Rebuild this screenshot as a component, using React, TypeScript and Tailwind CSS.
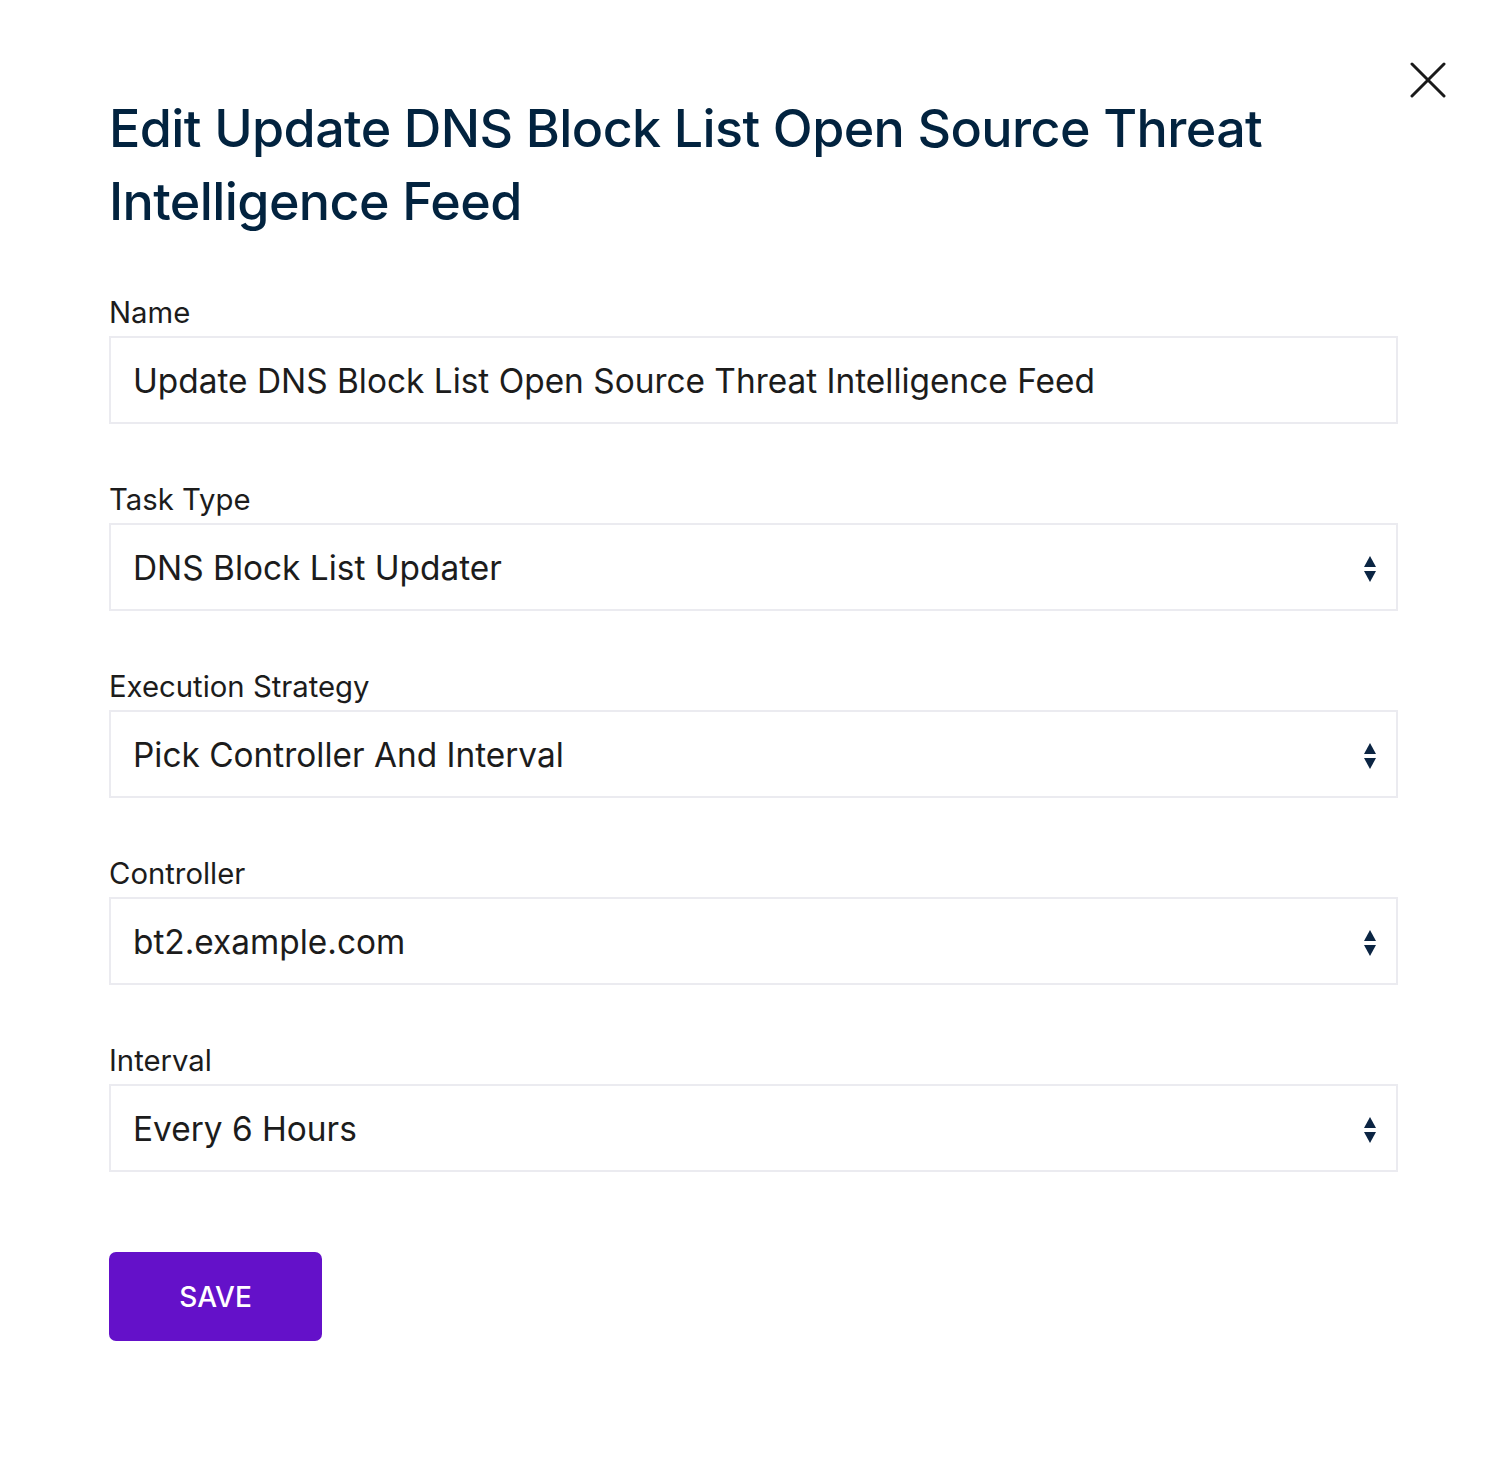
import React from "react";

const fields = [
  { label: "Name", value: "Update DNS Block List Open Source Threat Intelligence Feed", select: false },
  { label: "Task Type", value: "DNS Block List Updater", select: true },
  { label: "Execution Strategy", value: "Pick Controller And Interval", select: true },
  { label: "Controller", value: "bt2.example.com", select: true },
  { label: "Interval", value: "Every 6 Hours", select: true },
];

const SortArrows = () => (
  <svg width="16" height="28" viewBox="0 0 16 28" className="shrink-0">
    <path d="M8 1 L14 12 H2 Z" fill="#0b2543" />
    <path d="M8 27 L14 16 H2 Z" fill="#0b2543" />
  </svg>
);

const App: React.FC = () => {
  return (
    <div
      className="relative min-h-[1460px] w-full bg-white pl-[109px] pr-[110px] pt-[92px]"
      style={{ fontFamily: "Inter, 'Noto Sans', sans-serif" }}
    >
      <button aria-label="Close" className="absolute right-[62px] top-[62px] h-[36px] w-[36px]">
        <svg width="36" height="36" viewBox="0 0 36 36">
          <path d="M2 2 L34 34 M34 2 L2 34" stroke="#1a1a1a" strokeWidth="3" strokeLinecap="round" />
        </svg>
      </button>

      <h1 className="w-[1220px] text-[52px] font-medium leading-[73px] tracking-[-0.6px] text-[#02233f]">
        Edit Update DNS Block List Open Source Threat Intelligence Feed
      </h1>

      <form className="mt-[56px] flex flex-col gap-[57px]">
        {fields.map((f) => (
          <div key={f.label} className="flex flex-col">
            <label className="mb-[4px] text-[29.3px] leading-[38px] text-[#1c1c1c]">{f.label}</label>
            <div className="flex h-[88px] items-center justify-between border-2 border-[#ebebf0] pl-[22px] pr-[18px] pt-[3px]">
              <span className="text-[33.4px] text-[#1c1c1c]">{f.value}</span>
              {f.select && <SortArrows />}
            </div>
          </div>
        ))}
      </form>

      <button className="mt-[80px] h-[89px] w-[213px] rounded-[7px] bg-[#6411c9] text-[28px] font-medium text-white">
        SAVE
      </button>
    </div>
  );
};

export default App;
